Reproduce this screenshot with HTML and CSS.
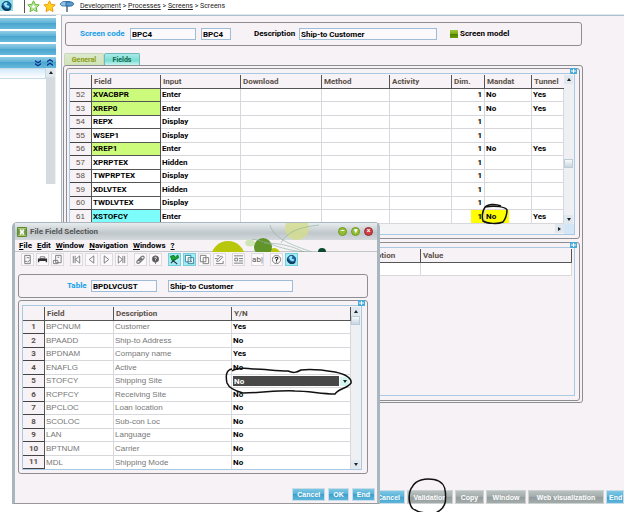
FILE: index.html
```html
<!DOCTYPE html>
<html lang="en">
<head>
<meta charset="utf-8">
<meta name="viewport" content="width=device-width, initial-scale=1">
<title>Screens</title>
<link rel="stylesheet" href="styles.css">
</head>
<body>
<header class="topbar">
  <button class="globe" aria-label="Home"><svg viewBox="0 0 12 12"><use href="#i-globe"/></svg></button>
  <span class="topicons">
    <svg viewBox="0 0 13 13"><path d="M6.500 .8l1.700 3.600 4 .5-2.900 2.700.7 4-3.500-1.900-3.500 1.900.7-4L.8 4.900l4-.5z" fill="#d8f5c0" stroke="#5bb531"/><path d="M6.500 3.500l1 2 2 .3-1.500 1.400.4 2-1.900-1-1.900 1 .4-2-1.500-1.400 2-.3z" fill="#fff" stroke="#7cc850" stroke-width=".6"/></svg>
    <svg viewBox="0 0 13 13"><path d="M6.500 .8l1.700 3.600 4 .5-2.900 2.700.7 4-3.500-1.900-3.500 1.900.7-4L.8 4.900l4-.5z" fill="#ffd21c" stroke="#f39a16"/></svg>
    <svg class="wide" viewBox="0 0 16 13"><path d="M7 1h2v11H7z" fill="#7d8f9c"/><path d="M1 4l3-2.500h7v4.500H3z" fill="#8fc0e6" stroke="#2f6da3" stroke-width=".8"/><path d="M7 2h6l2 1.800L13 6H7z" fill="#5d9bd0" stroke="#245d92" stroke-width=".8"/></svg>
  </span>
  <nav class="crumbs" aria-label="Breadcrumb"><a href="#">Development</a> &gt; <a href="#">Processes</a> &gt; <a href="#">Screens</a> &gt; <span>Screens</span></nav>
</header>

<div class="workspace">
  <aside class="sidebar">
    <div class="bar"></div><div class="bar"></div><div class="bar"></div>
    <div class="bar tools">
      <svg viewBox="0 0 8 8"><path d="M1 1l3 2 3-2v1.500L4 4.500 1 2.500zM1 4l3 2 3-2v1.500L4 7.500 1 5.500z" fill="#08318c"/></svg>
      <svg viewBox="0 0 8 8"><path d="M1 3.500l3-2 3 2V2L4 0 1 2zM1 7l3-2 3 2V5.500l-3-2-3 2z" fill="#08318c"/></svg>
    </div>
    <div class="tree"><div class="list"></div><div class="scroll"><i class="arrow up"></i><i class="thumb full"></i></div></div>
  </aside>

  <main class="screen">
    <section class="box filters">
      <label class="key code" for="code">Screen code</label>
      <input id="code" class="w-code" value="BPC4">
      <input class="w-short" value="BPC4" aria-label="Screen abbreviation">
      <label class="desc" for="desc">Description</label>
      <input id="desc" class="w-desc" value="Ship-to Customer">
      <input type="checkbox" id="model" checked><label for="model">Screen model</label>
    </section>

    <div class="tabs"><button class="tab">General</button><button class="tab active">Fields</button></div>

    <div class="panel">
      <section class="box frame">
        <svg class="expand" viewBox="0 0 7 6"><path d="M0 0h7v6H0z" fill="#48abd8"/><path d="M3 1h1v1.500h2v1H4V5H3V3.500H1v-1h2z" fill="#fff"/></svg>
        <div class="grid">
          <div class="gridbody">
            <table class="fields">
              <colgroup><col class="c22"><col class="c69"><col class="c80"><col class="c81"><col class="c68"><col class="c62"><col class="c33"><col class="c47"><col></colgroup>
              <thead><tr><th></th><th>Field</th><th>Input</th><th>Download</th><th>Method</th><th>Activity</th><th>Dim.</th><th>Mandat</th><th>Tunnel</th></tr></thead>
              <tbody>
                <tr><th>52</th><td class="lime">XVACBPR</td><td>Enter</td><td></td><td></td><td></td><td>1</td><td>No</td><td>Yes</td></tr>
                <tr><th>53</th><td class="lime">XREP0</td><td>Enter</td><td></td><td></td><td></td><td>1</td><td>No</td><td>Yes</td></tr>
                <tr><th>54</th><td>REPX</td><td>Display</td><td></td><td></td><td></td><td>1</td><td></td><td></td></tr>
                <tr><th>55</th><td>WSEP1</td><td>Display</td><td></td><td></td><td></td><td>1</td><td></td><td></td></tr>
                <tr><th>56</th><td class="lime">XREP1</td><td>Enter</td><td></td><td></td><td></td><td>1</td><td>No</td><td>Yes</td></tr>
                <tr><th>57</th><td>XPRPTEX</td><td>Hidden</td><td></td><td></td><td></td><td>1</td><td></td><td></td></tr>
                <tr><th>58</th><td>TWPRPTEX</td><td>Display</td><td></td><td></td><td></td><td>1</td><td></td><td></td></tr>
                <tr><th>59</th><td>XDLVTEX</td><td>Hidden</td><td></td><td></td><td></td><td>1</td><td></td><td></td></tr>
                <tr><th>60</th><td>TWDLVTEX</td><td>Display</td><td></td><td></td><td></td><td>1</td><td></td><td></td></tr>
                <tr><th>61</th><td class="cyan">XSTOFCY</td><td>Enter</td><td></td><td></td><td></td><td class="mark-end">1</td><td class="mark-start">No<svg class="ink ring" viewBox="0 0 28 22"><path d="M20 3C14 .5 6 1 3.500 5 1 9 .8 15 2 18c4 2.500 14 3.500 20 1 3-4 4-9 4-12C25 4 14 2 4 4"/></svg></td><td>Yes</td></tr>
              </tbody>
            </table>
            <div class="scroll"><i class="arrow up"></i><i class="track"></i><i class="thumb"></i><i class="track small"></i><i class="arrow down"></i></div>
          </div>
          <div class="hscroll"><i class="arrow right"></i><i class="corner"></i></div>
        </div>
      </section>

      <section class="box frame second">
        <svg class="expand" viewBox="0 0 7 6"><path d="M0 0h7v6H0z" fill="#48abd8"/><path d="M3 1h1v1.500h2v1H4V5H3V3.500H1v-1h2z" fill="#fff"/></svg>
        <div class="grid">
          <table class="params">
            <colgroup><col class="c22"><col class="c260"><col class="c69"><col></colgroup>
            <thead><tr><th></th><th></th><th>Description</th><th>Value</th></tr></thead>
            <tbody><tr><th></th><td></td><td></td><td></td></tr></tbody>
          </table>
        </div>
      </section>
    </div>

    <footer class="actions">
      <button class="btn">Cancel</button>
      <button class="btn grey b-val">Validation</button>
      <button class="btn grey b-copy">Copy</button>
      <button class="btn grey b-win">Window</button>
      <button class="btn grey b-web">Web visualization</button>
      <button class="btn b-end">End</button>
      <svg class="ink circle" viewBox="0 0 42 38"><path d="M5 10C9 3 18 1 27 2.500 35 4 39 10 38.500 18c1 8-2 14-9 17.500-8 1.500-18 .5-24-4C1 26 1 14 6 9"/></svg>
    </footer>
  </main>
</div>

<section class="dialog" aria-label="File Field Selection">
  <div class="title">
    <svg class="logo" viewBox="0 0 10 10"><path d="M.5.500h9v9h-9z" fill="#a8c874" stroke="#5c8a2c"/><path d="M2.500 2.500l5 5M7.500 2.500l-5 5" stroke="#fff" stroke-width="1.500"/><path d="M2 2v6M8 2v6" stroke="#3f6d20"/></svg>
    <span>File Field Selection</span>
    <span class="ctl"><button aria-label="Minimize" class="dot">–</button><button aria-label="Maximize" class="dot">▾</button><button aria-label="Close" class="dot red">×</button></span>
  </div>
  <svg class="art" viewBox="0 0 120 29"><circle cx="21" cy="35" r="17" fill="#b9c70a"/><circle cx="67" cy="31" r="6" fill="#b9c70a"/><circle cx="56" cy="24" r="9" fill="#61952a"/><circle cx="90" cy="5" r="12" fill="#d5dd8c" opacity=".8"/><ellipse cx="43" cy="20" rx="5" ry="3.500" fill="#cfe5b5"/><circle cx="115" cy="29" r="4" fill="#0b4a2c"/><path d="M45 16c15 2 30 12 55 13M63 2c4 14 22 20 42 27M112 2C94 4 80 8 74 20M57 20c18 0 30 4 40 9" fill="none" stroke="#8bae9b" stroke-width=".6"/></svg>
  <nav class="menu"><a href="#"><u>F</u>ile</a><a href="#"><u>E</u>dit</a><a href="#"><u>W</u>indow</a><a href="#"><u>N</u>avigation</a><a href="#"><u>W</u>indows</a><a href="#"><u>?</u></a></nav>
  <div class="toolbar">
    <span class="set">
      <button aria-label="New"><svg viewBox="0 0 12 12"><path d="M3 1.500h6v9H3zM5 4h3M3 8h2l1 1 3-3"/></svg></button>
      <button aria-label="Print"><svg viewBox="0 0 12 12"><path d="M3.500 3h5v2h-5z"/><path d="M1 5h10v4H9.500V7.500h-7V9H1z" fill="#333" stroke="none"/></svg></button>
      <button aria-label="Preview"><svg viewBox="0 0 12 12"><path d="M4 1.500h6v8H4zM1.500 7h5v3.500h-5zM6 3.500h2"/></svg></button>
    </span>
    <span class="set">
      <button aria-label="First"><svg viewBox="0 0 12 12"><path d="M2.500 2v8M4.500 2v8M9.500 2v8L5 6z"/></svg></button>
      <button aria-label="Previous"><svg viewBox="0 0 12 12"><path d="M8.500 2v8l-5-4z"/></svg></button>
      <button aria-label="Next"><svg viewBox="0 0 12 12"><path d="M3.500 2v8l5-4z"/></svg></button>
      <button aria-label="Last"><svg viewBox="0 0 12 12"><path d="M9.500 2v8M7.500 2v8M2.500 2v8L7 6z"/></svg></button>
    </span>
    <span class="set">
      <button aria-label="Attachment"><svg viewBox="0 0 12 12"><path d="M2 8l5-5c2-1.500 4 0 2.500 2L5 9.500C3 11 1 9.500 2.500 7.500L7 4M4 8l4-3" stroke-width="1.300"/></svg></button>
      <button aria-label="Comment"><svg viewBox="0 0 12 12"><circle cx="6" cy="5.500" r="3.500" fill="#555"/><path d="M5 4.500c0-1.500 2.500-1 2 .2L6 6v1" stroke="#fff"/><path d="M6 9v2"/></svg></button>
    </span>
    <span class="set">
      <button class="on" aria-label="Pick"><svg viewBox="0 0 12 12"><path d="M2 10l8-7M3 6l6 5" stroke="#234" stroke-width="1.200"/><path d="M1.500 2.500l4-1 1 2.500 3-3 1 3-4 2-3 1z" fill="#18a838" stroke="#087a20"/></svg></button>
      <button class="on" aria-label="Copy"><svg viewBox="0 0 12 12"><path d="M1.500 1.500h6v7h-6zM4.500 4h6v6.500h-6z" fill="#fff" stroke="#2a7d9a"/><path d="M6 6l3 3"/></svg></button>
      <button aria-label="Duplicate"><svg viewBox="0 0 12 12"><path d="M1.500 1.500h6v7h-6zM4.500 4h6v6.500h-6z" fill="#fff"/></svg></button>
      <button aria-label="Edit"><svg viewBox="0 0 12 12"><path d="M2 10.500h8v-3M3 7l5-5 1.500 1.500L5 8H3zM6 2H3M1 5h3"/></svg></button>
    </span>
    <span class="set"><button aria-label="Layout"><svg viewBox="0 0 12 12"><path d="M1 2h10M2 4.500h3v3H2zM6.500 5H11M6.500 7.500H11M1 10h10"/></svg></button></span>
    <span class="set"><button class="ab" aria-label="Text">ab|</button></span>
    <span class="set">
      <button aria-label="Help"><svg viewBox="0 0 12 12"><circle cx="6" cy="6" r="4.500"/><path d="M4.500 5c0-2 3.500-2 3 0L6 6.500v1M6 8.300v1" stroke="#222" stroke-width="1.200"/></svg></button>
      <button class="on" aria-label="Web"><svg viewBox="0 0 12 12"><g id="i-globe"><circle cx="6" cy="6" r="4.500" fill="#176cae" stroke="#0b4370"/><path d="M3 4c1-2 4-2.500 4-1L6 5l3 1-1 2-3-1z" fill="#9ee6f5" stroke="none"/><path d="M1.500 6c2 4 6 5 8.500 3" stroke="#13324b" stroke-width="1.500" fill="none"/></g></svg></button>
    </span>
  </div>

  <div class="box tablebox">
    <label class="key tbl" for="tbl">Table</label>
    <input id="tbl" class="w-code" value="BPDLVCUST">
    <input class="w-name" value="Ship-to Customer" aria-label="Table name">
  </div>

  <div class="box frame pick">
    <svg class="expand" viewBox="0 0 7 6"><path d="M0 0h7v6H0z" fill="#48abd8"/><path d="M3 1h1v1.500h2v1H4V5H3V3.500H1v-1h2z" fill="#fff"/></svg>
    <div class="grid">
      <div class="gridbody">
        <table class="choices">
          <colgroup><col class="c22"><col class="c69"><col class="c118"><col></colgroup>
          <thead><tr><th></th><th>Field</th><th>Description</th><th>Y/N</th></tr></thead>
          <tbody>
            <tr><th>1</th><td>BPCNUM</td><td>Customer</td><td>Yes</td></tr>
            <tr><th>2</th><td>BPAADD</td><td>Ship-to Address</td><td>No</td></tr>
            <tr><th>3</th><td>BPDNAM</td><td>Company name</td><td>Yes</td></tr>
            <tr><th>4</th><td>ENAFLG</td><td>Active</td><td>No</td></tr>
            <tr><th>5</th><td>STOFCY</td><td>Shipping Site</td><td class="edit"><span class="combo"><select aria-label="Shipping Site Y/N"><option>No</option><option>Yes</option></select><i class="arrow down"></i></span><svg class="ink loop" viewBox="0 0 128 28"><path d="M7 1C1 2 .5 8 2 15c2 5 8 8 16 10 18 0 36-3 52-2 14 0 26 3 40 3 4-6 12-5 16-11 1-5-6-9-16-11C98 2 84 1 76 2c-5 3-8 3-13 1C50 3 40 1 28 1 20 0 12-.5 7 3"/></svg></td></tr>
            <tr><th>6</th><td>RCPFCY</td><td>Receiving Site</td><td>No</td></tr>
            <tr><th>7</th><td>BPCLOC</td><td>Loan location</td><td>No</td></tr>
            <tr><th>8</th><td>SCOLOC</td><td>Sub-con Loc</td><td>No</td></tr>
            <tr><th>9</th><td>LAN</td><td>Language</td><td>No</td></tr>
            <tr><th>10</th><td>BPTNUM</td><td>Carrier</td><td>No</td></tr>
            <tr><th>11</th><td>MDL</td><td>Shipping Mode</td><td>No</td></tr>
          </tbody>
        </table>
        <div class="scroll"><i class="arrow up"></i><i class="thumb"></i><i class="track"></i><i class="arrow down"></i></div>
      </div>
    </div>
  </div>
  <div class="dialog-actions"><button class="btn">Cancel</button><button class="btn">OK</button><button class="btn">End</button></div>
</section>
</body>
</html>
```

FILE: styles.css
```css
* { box-sizing: border-box; }
body {
  margin: 0;
  min-height: 100vh;
  display: flex;
  flex-direction: column;
  position: relative;
  overflow: hidden;
  padding-bottom: 8px;
  background: #fff;
  color: #000;
  font: bold 8px/10px Roboto, "Liberation Sans", Arial, sans-serif;
}
button, input, select { font: inherit; color: inherit; margin: 0; }
button { border: 0; padding: 0; background: none; }
a { color: inherit; }
svg { display: block; }

.topbar { display: flex; height: 15px; border-bottom: 1px solid #e4e8e4; align-items: flex-start; }
.globe { width: 13px; height: 11px; background: #8fdcea; overflow: hidden; }
.globe svg { width: 13px; height: 12px; }
.topicons { display: flex; gap: 3px; margin-left: 11px; padding-left: 2px; border-left: 1px solid #555; }
.topicons svg { width: 13px; height: 13px; }
.topicons .wide { width: 16px; }
.crumbs { margin-left: 5px; font-weight: normal; font-size: 7px; line-height: 12px; color: #222; }

.workspace { flex: 1; display: flex; }
.sidebar { width: 56px; padding-top: 3px; display: flex; flex-direction: column; border-top: 1px solid #a8c0d4; }
.bar { height: 11px; margin-bottom: 2px; background: linear-gradient(#92cde4, #5db3d8 45%, #4aa5ce 50%, #65b9dc); }
.bar:first-child { margin-top: -1px; }
.tools { display: flex; justify-content: flex-end; align-items: center; gap: 4px; padding-right: 2px; margin-bottom: 0; }
.tools svg { width: 8px; height: 8px; }
.tree { display: flex; height: 116px; justify-content: space-between; }
.list { width: 46px; height: 11px; background: linear-gradient(#d4e9fa, #fff); border: 1px solid #c4dcea; border-left: 0; }

.scroll { width: 10px; display: flex; flex-direction: column; background: #eef0f3; }
.arrow { width: 9px; height: 9px; display: flex; align-items: center; justify-content: center; background: #dfe8ef; flex: none; }
.arrow::before { content: ""; border: 2px solid transparent; }
.up::before { border-top: 0; border-bottom: 3px solid #222; }
.down::before { border-bottom: 0; border-top: 3px solid #222; }
.right::before { border-right: 0; border-left: 3px solid #222; }
.track { flex: 1; }
.track.small { flex: 0 0 47px; }
.thumb { height: 9px; width: 9px; background: linear-gradient(#f8fafc, #c7d6e0); border: 1px solid #bccbd6; flex: none; }
.thumb.full { flex: 1; background: #d5dbde; border: 0; }

.screen {
  flex: 1;
  min-width: 0;
  margin-left: 5px;
  padding: 6px 41px 0 1px;
  display: flex;
  flex-direction: column;
  position: relative;
  background: #f6f2f6;
  border-left: 1px solid #a9b5be;
  border-top: 1px solid #a8c0d4;
}
.box { border: 1px solid #8d8d92; border-radius: 3px; }
input {
  height: 12px;
  padding: 0 1px;
  border: 1px solid #9dbcd8;
  background: #fbf9fc;
  border-radius: 0;
}
.key { color: #12a0e8; }
.filters { display: flex; align-items: center; height: 24px; margin: 0 1px 0 2px; padding-left: 14px; }
.code { width: 50px; }
.w-code { width: 66px; }
.w-short { width: 30px; margin-left: 5px; }
.desc { width: 45px; margin-left: 23px; }
.w-desc { width: 138px; }
#model { appearance: none; width: 8px; height: 8px; margin: 0 2px 0 13px; padding: 0; border: 0; background: linear-gradient(#9cc83c, #79a90e 50%, #4f8200 55%, #6c9c08); }

.tabs { display: flex; margin-top: 7px; padding-left: 1px; }
.tab { width: 40px; height: 12px; background: linear-gradient(#dce9cf, #cfe3b6); border: 1px solid #c9d6bd; border-bottom: 0; color: #8b9a10; font-size: 7px; border-radius: 2px 2px 0 0; }
.active { width: 36px; background: linear-gradient(#a8eae8, #7cdcd2 60%, #c8f4f0); border-color: #6fb8bb; color: #12684f; }

.panel { padding: 2px 2px 1px; border: 1px solid #8d8d92; border-radius: 3px; display: flex; flex-direction: column; gap: 3px; }
.frame { position: relative; padding: 4px 4px 3px 2px; }
.expand { position: absolute; top: -1px; right: 2px; width: 7px; height: 6px; }
.grid { border: 1px solid #a9c8e2; padding-top: 1px; }
.gridbody { display: flex; }
.gridbody table { flex: 1; min-width: 0; }
.second { padding-bottom: 4px; }
.second .grid { height: 149px; padding-right: 2px; }

table { border-collapse: separate; border-spacing: 0; table-layout: fixed; width: 100%; }
.c22 { width: 22px; } .c33 { width: 33px; } .c47 { width: 47px; } .c62 { width: 62px; }
.c68 { width: 68px; } .c69 { width: 69px; } .c80 { width: 80px; } .c81 { width: 81px; }
.c118 { width: 118px; } .c260 { width: 260px; }
th, td { height: 13px; padding: 0 0 0 1px; text-align: left; white-space: nowrap; line-height: 10px; }
tr:nth-child(even) > * { height: 14px; }
td { background: #fff; border-right: 1px solid #d8d8dc; border-bottom: 1px solid #d8d8dc; }
thead th { height: 14px; padding-left: 2px; color: #5a5048; border-right: 1px solid #555; border-bottom: 1px solid #555; background: #f6f2f6; }
tbody th { padding: 0; text-align: center; color: #5a5048; border-right: 1px solid #555; border-bottom: 1px solid #444; background: #f6f2f6; }
.fields thead th:last-child { border-right: 0; }
.fields tbody th { font: normal 8px/10px "Liberation Sans", Arial, sans-serif; }
.fields td:nth-child(2) { border-color: #555; }
.fields td:nth-child(7) { text-align: right; padding-right: 2px; }
.fields .lime { background: #ccfa7a; }
.fields .cyan { background: #7dfcfc; }
.mark-end { background: linear-gradient(to left, #ff0 13px, #fff 13px); }
.mark-start { position: relative; background: linear-gradient(to right, #ff0 24px, #fff 24px); }
.hscroll { display: flex; justify-content: flex-end; height: 10px; background: #f4f4f7; }
.corner { width: 10px; background: #d4e5f6; }

.actions { position: relative; margin: auto -41px 0 0; display: flex; justify-content: flex-end; gap: 2px; height: 14px; }
.btn {
  height: 13px;
  padding: 0 4px;
  color: #fff;
  font: bold 7px/9px "Liberation Sans", Arial, sans-serif;
  white-space: nowrap;
  border: 1px solid #c8dde8;
  background: linear-gradient(#7cc7e4, #5bb3d9 45%, #3f9fcc 50%, #5db6db);
}
.grey { border-color: #cdd1d1; background: linear-gradient(#b9c0c0, #a5adad 45%, #929b9b 50%, #a3abab); }
.actions .btn { height: 14px; }
.b-val { width: 46px; } .b-copy { width: 29px; } .b-win { width: 40px; } .b-web { width: 76px; }
.actions .b-end { width: 18px; padding: 0 2px; }

.ink { position: absolute; fill: none; stroke: #111; stroke-width: 1.5; overflow: visible; z-index: 1; }
.ring { width: 28px; height: 22px; left: -4px; top: -7px; }
.circle { width: 42px; height: 38px; right: 175px; bottom: -11px; }
.loop { width: 128px; height: 28px; left: -7px; top: -7px; }

.dialog {
  position: absolute;
  left: 12px;
  top: 222px;
  width: 368px;
  background: #f6f2f6;
  border: solid #a8b6bf;
  border-width: 1px 3px;
  border-bottom-color: #999;
  border-radius: 5px 5px 0 0;
  z-index: 2;
}
.title { display: flex; align-items: center; gap: 3px; height: 17px; padding: 0 4px 0 2px; color: #555; background: linear-gradient(#e8eced, #bfc7cb 60%, #d5d9dc); }
.logo { width: 10px; height: 10px; }
.ctl { margin-left: auto; display: flex; gap: 4px; position: relative; z-index: 1; }
.dot { width: 9px; height: 9px; border-radius: 50%; border: 1px solid #6f9a20; background: #94bd35; color: #fff; line-height: 7px; font-size: 7px; }
.red { background: #cf3e42; border-color: #962a2e; }
.art { position: absolute; top: 0; right: 50px; width: 120px; height: 29px; }
.menu { display: flex; gap: 5px; height: 12px; padding-left: 4px; align-items: center; border-bottom: 1px solid #c2c6ca; }
.menu a { text-decoration: none; }
.toolbar { display: flex; gap: 6px; padding: 1px 0 0 6px; }
.set { display: flex; gap: 2px; }
.toolbar button { width: 13px; height: 13px; border: 1px solid #dcdadf; background: #fbf9fb; }
.toolbar svg { width: 11px; height: 11px; fill: none; stroke: #777; stroke-width: 1; }
.toolbar .on { background: #a5ebf2; border-color: #74cfdd; }
.toolbar .ab { font-weight: normal; line-height: 9px; color: #555; }
.tablebox { display: flex; align-items: center; height: 24px; margin: 8px 9px 0 3px; padding-left: 48px; }
.tbl { width: 24px; }
.w-name { width: 125px; margin-left: 11px; }
.pick { margin: 2px 9px 0 3px; padding: 4px 5px 3px 3px; }
.choices td { color: #777; font: normal 8px/10px "Liberation Sans", Arial, sans-serif; }
.choices td:last-child { color: #000; font: bold 8px/10px Roboto, "Liberation Sans", Arial, sans-serif; }
.choices tr:last-child td { border-bottom: 0; }
.edit { position: relative; }
.combo { display: flex; align-items: center; }
.combo select { appearance: none; flex: 1; height: 10px; border: 0; border-radius: 0; padding: 0 1px; background: #484848; color: #fff; line-height: 9px; }
.combo .arrow { background: #d5f5f1; margin: 0 1px; }
.dialog-actions { display: flex; justify-content: flex-end; gap: 3px; padding: 14px 2px 2px 0; }
```
